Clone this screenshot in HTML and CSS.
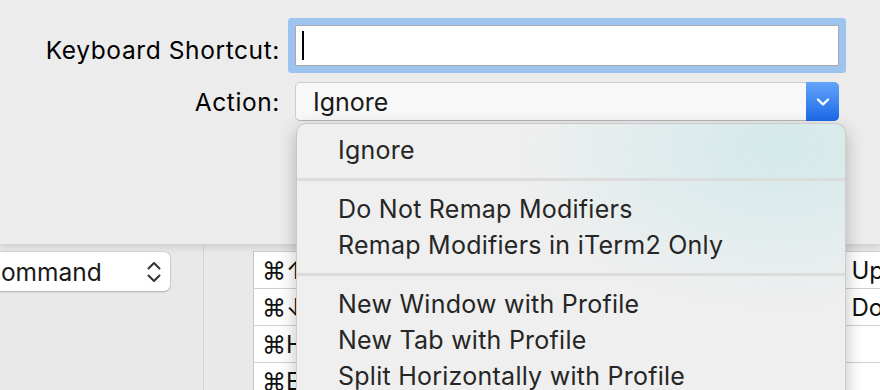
FILE: index.html
```html
<!DOCTYPE html>
<html>
<head>
  <link rel="stylesheet" href="styles.css">
</head>
<body>
  <div class="window">
    <div class="sheet">
      <div class="form">
        <label class="label label-field">Keyboard Shortcut:</label>
        <div class="field"><span class="caret"></span></div>
        <label class="label">Action:</label>
        <div class="popup">
          <span class="popup-value">Ignore</span>
          <span class="popup-arrow">
            <svg viewBox="0 0 16 16" width="16" height="16">
              <path d="M3 5.5 L8 10.5 L13 5.5" fill="none" stroke="#fff" stroke-width="2.4" stroke-linecap="round" stroke-linejoin="round"/>
            </svg>
          </span>
        </div>
      </div>
    </div>

    <div class="backdrop">
      <div class="side">
        <div class="select">
          <span class="select-value">Command</span>
          <svg class="updown" viewBox="0 0 16 24" width="16" height="24">
            <path d="M2.5 8.5 L8 3 L13.5 8.5" fill="none" stroke="#333" stroke-width="2" stroke-linecap="round" stroke-linejoin="round"/>
            <path d="M2.5 15.5 L8 21 L13.5 15.5" fill="none" stroke="#333" stroke-width="2" stroke-linecap="round" stroke-linejoin="round"/>
          </svg>
        </div>
      </div>
      <div class="gutter"></div>
      <table class="keys">
        <tr><td class="key">⌘↑</td><td class="act">Up</td></tr>
        <tr><td class="key">⌘↓</td><td class="act">Down</td></tr>
        <tr><td class="key">⌘Home</td><td class="act"></td></tr>
        <tr><td class="key">⌘End</td><td class="act"></td></tr>
      </table>
    </div>

    <!-- open popup menu -->
    <div class="menu">
      <div class="menu-item">Ignore</div>
      <div class="menu-sep"></div>
      <div class="menu-item">Do Not Remap Modifiers</div>
      <div class="menu-item">Remap Modifiers in iTerm2 Only</div>
      <div class="menu-sep"></div>
      <div class="menu-item">New Window with Profile</div>
      <div class="menu-item">New Tab with Profile</div>
      <div class="menu-item">Split Horizontally with Profile</div>
    </div>
  </div>
</body>
</html>
```

FILE: styles.css
```css
* {
  margin: 0;
  padding: 0;
  box-sizing: border-box;
  font-family: Inter, 'Helvetica Neue', sans-serif;
}

body {
  width: 880px;
  height: 390px;
  overflow: hidden;
  background: #e8e8e8;
}

.window {
  position: relative;
  width: 880px;
  height: 390px;
  overflow: hidden;
}

.sheet {
  position: relative;
  z-index: 1;
  height: 244px;
  background: #ececec;
  box-shadow: 0 1px 0 #d2d2d2, 0 3px 8px rgba(0, 0, 0, 0.12);
  padding-top: 25px;
}

.form {
  display: grid;
  grid-template-columns: 279px 544px;
  column-gap: 16px;
  row-gap: 16px;
  align-items: center;
}

.label {
  font-size: 24.5px;
  letter-spacing: 0.6px;
  color: #000;
  text-align: right;
  margin-right: -1px;
}

.label-field {
  padding-top: 9px;
}

.field {
  height: 41px;
  background: #fff;
  border: 1px solid #a9a9a9;
  border-radius: 1px;
  box-shadow: 0 0 0 7px #9dc4ef;
  display: flex;
  align-items: center;
}

.caret {
  width: 2px;
  height: 29px;
  margin-left: 6px;
  background: #000;
}

.popup {
  height: 39px;
  display: flex;
  align-items: stretch;
  background: #f8f8f8;
  border: 1px solid #cdcdcd;
  border-bottom-color: #b5b5b5;
  border-radius: 5px;
}

.popup-value {
  flex: 1;
  display: flex;
  align-items: center;
  padding-left: 17px;
  padding-top: 1px;
  font-size: 25px;
  color: #1a1a1a;
}

.popup-arrow {
  width: 33px;
  margin: -1px -1px -1px 0;
  display: flex;
  align-items: center;
  justify-content: center;
  background: linear-gradient(#63a4fa, #1c69e8);
  border-radius: 0 5px 5px 0;
}

.backdrop {
  height: 146px;
  display: flex;
  background: #e9e9e9;
}

.side {
  width: 204px;
  flex-shrink: 0;
  border-right: 1px solid #d4d4d4;
  padding-top: 8px;
}

.select {
  width: 198px;
  height: 39px;
  margin-left: -28px;
  padding: 0 8px 0 11px;
  display: flex;
  align-items: center;
  justify-content: space-between;
  background: #fff;
  border-radius: 6px;
  box-shadow: 0 0 0 1px rgba(0, 0, 0, 0.08), 0 1px 2px rgba(0, 0, 0, 0.2);
}

.select-value {
  font-size: 24.5px;
  color: #1a1a1a;
}

.gutter {
  width: 49px;
  flex-shrink: 0;
}

.keys {
  flex-shrink: 0;
  width: 700px;
  margin-top: 7px;
  border-collapse: collapse;
  border-left: 1px solid #c6c6c6;
  border-top: 1px solid #d0d0d0;
  align-self: flex-start;
}

.keys td {
  height: 37px;
  padding: 0;
  background: #fff;
  border-bottom: 1px solid #d0d0d0;
  font-size: 24px;
  color: #111;
  white-space: nowrap;
}

.key {
  width: 592px;
  padding-left: 8px !important;
}

.act {
  padding-left: 6px !important;
}

.menu {
  position: absolute;
  left: 296px;
  top: 123px;
  width: 550px;
  height: 300px;
  padding-top: 8px;
  background:
    radial-gradient(ellipse 260px 160px at 88% 8%, rgba(206, 232, 234, 0.85), rgba(206, 232, 234, 0) 100%),
    #efefef;
  border: 1px solid rgba(0, 0, 0, 0.14);
  border-radius: 10px;
  box-shadow: 0 6px 18px rgba(0, 0, 0, 0.25);
  z-index: 2;
}

.menu-item {
  height: 36px;
  padding-left: 41px;
  display: flex;
  align-items: center;
  font-size: 25px;
  letter-spacing: 0.25px;
  color: #262626;
}

.menu-sep {
  height: 23px;
  display: flex;
  align-items: center;
}

.menu-sep::after {
  content: "";
  flex: 1;
  height: 3px;
  background: #dcdcdc;
}
```
